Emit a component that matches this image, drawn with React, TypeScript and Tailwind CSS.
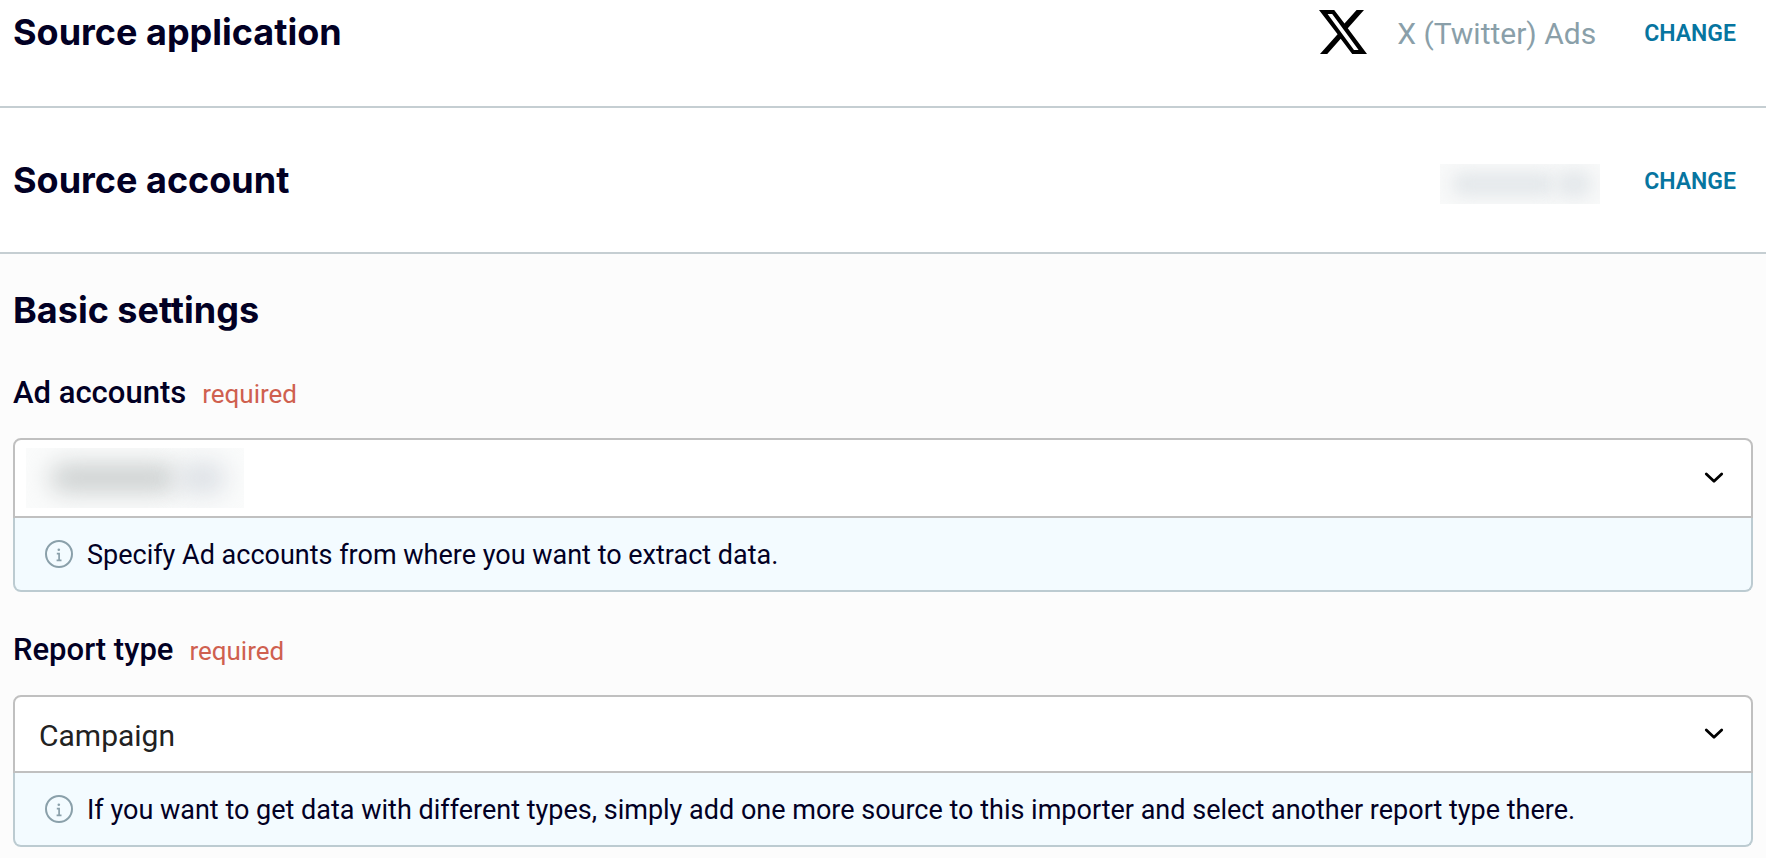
import { useState } from 'react'
import type { ReactNode } from 'react'

function XLogo() {
  return (
    <svg viewBox="0 0 48 45" className="h-11 w-12" preserveAspectRatio="none" aria-hidden="true">
      <path
        fillRule="evenodd"
        d="M0 0h15.2l10.3 13.9L37.6 0H45L28.8 18.7 48 45H33.2L21.7 29.4 8.2 45H1l17.6-20.3zM8.6 4 35 40.9h4.6L13.2 4z"
      />
    </svg>
  )
}

function InfoIcon() {
  return (
    <svg viewBox="0 0 28 28" className="size-7 shrink-0" fill="none" stroke="#8aa0aa" strokeWidth="2" aria-hidden="true">
      <circle cx="14" cy="14" r="13" />
      <path d="M11.8 13.7h2.3v6.5M11.6 20.3h4.9" strokeWidth="1.7" />
      <circle cx="13.8" cy="9.8" r="1.3" fill="#8aa0aa" stroke="none" />
    </svg>
  )
}

function Chevron() {
  return (
    <svg
      viewBox="0 0 20 12"
      className="pointer-events-none col-start-1 row-start-1 mr-[29px] h-3 w-5 self-center justify-self-end"
      fill="none"
      stroke="#000"
      strokeWidth="2.8"
      strokeLinecap="round"
      strokeLinejoin="round"
      aria-hidden="true"
    >
      <path d="m2.3 2 7.7 7.2L17.7 2" />
    </svg>
  )
}

function SourceRow({ title, className, children }: { title: string; className: string; children: ReactNode }) {
  return (
    <section className={`flex items-center justify-between border-b-2 border-[#c5ced2] pl-[13px] pr-[30px] ${className}`}>
      <h2 className="font-[Inter,sans-serif] text-4xl leading-11 font-bold">{title}</h2>
      <div className="flex h-11 items-center">
        {children}
        <button type="button" aria-label={`Change ${title.toLowerCase()}`} className="pt-1 text-[23px] leading-8 font-semibold text-[#0675a0]">
          CHANGE
        </button>
      </div>
    </section>
  )
}

interface FieldProps {
  id: string
  label: string
  hint: string
  options: string[]
  hidden?: boolean
}

function Field({ id, label, hint, options, hidden }: FieldProps) {
  const [value, setValue] = useState(options[0])

  return (
    <div>
      <div className="flex items-baseline gap-4">
        <label htmlFor={id} className="text-[31px] leading-10 font-medium">{label}</label>
        <span className="text-[26px] leading-10 text-[#cf604f]">required</span>
      </div>
      <div className="mt-6 grid">
        <select
          id={id}
          value={value}
          onChange={e => setValue(e.target.value)}
          aria-describedby={`${id}-hint`}
          className={`col-start-1 row-start-1 w-full appearance-none rounded-t-lg border-2 border-[#c0c0c0] bg-white pt-[2px] pr-16 pl-6 text-[30px] text-[#222] ${hidden ? 'h-20' : 'h-[78px]'}`}
        >
          {options.map(o => <option key={o}>{o}</option>)}
        </select>
        {hidden && (
          <div className="pointer-events-none col-start-1 row-start-1 ml-[13px] flex h-15 w-[218px] items-center self-center overflow-hidden bg-[#fafbfb] pl-6">
            <div className="h-7 w-32 rounded-full bg-[#cbcfcf] blur-md" />
            <div className="h-8 w-12 rounded-full bg-[#dce0e5] blur-md" />
          </div>
        )}
        <Chevron />
      </div>
      <div className="flex h-[74px] items-center gap-[14px] rounded-b-lg border-2 border-t-0 border-[#bccbd1] bg-[#f3fbff] pl-[30px]">
        <InfoIcon />
        <p id={`${id}-hint`} className="pt-[2px] text-[27px] leading-9">{hint}</p>
      </div>
    </div>
  )
}

export default function App() {
  return (
    <main className="min-h-screen bg-[#fcfcfc] font-[Roboto,sans-serif] text-[#020024]">
      <SourceRow title="Source application" className="bg-white pt-[10px] pb-[52px]">
        <XLogo />
        <span className="mr-12 ml-[30px] pt-1 text-[30px] leading-10 text-[#8a9fa9]">X (Twitter) Ads</span>
      </SourceRow>
      <SourceRow title="Source account" className="bg-white py-[50px]">
        <div className="mt-2 mr-11 flex h-10 w-40 items-center overflow-hidden bg-[#f8f9f9] pl-3">
          <div className="h-6 w-26 rounded-full bg-[#e4e8eb] blur-sm" />
          <div className="h-7 w-9 rounded-full bg-[#e4e8eb] blur-sm" />
        </div>
      </SourceRow>

      <section className="px-[13px] pt-[34px] pb-3">
        <h2 className="font-[Inter,sans-serif] text-4xl leading-11 font-bold">Basic settings</h2>
        <div className="mt-[41px] flex flex-col gap-[38px]">
          <Field
            id="ad-accounts"
            label="Ad accounts"
            hint="Specify Ad accounts from where you want to extract data."
            options={['']}
            hidden
          />
          <Field
            id="report-type"
            label="Report type"
            hint="If you want to get data with different types, simply add one more source to this importer and select another report type there."
            options={['Campaign']}
          />
        </div>
      </section>
    </main>
  )
}
